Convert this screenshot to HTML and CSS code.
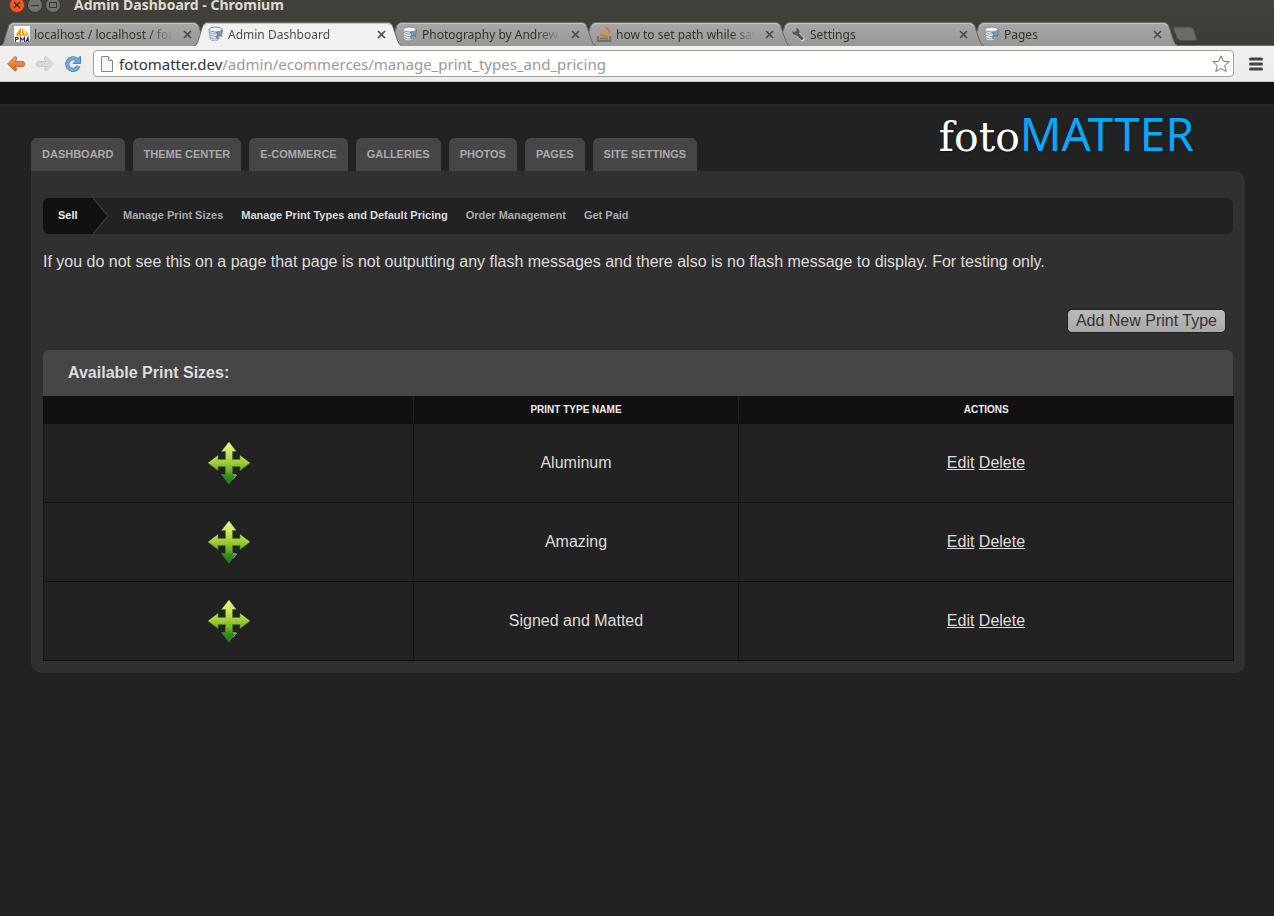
FILE: index.html
```html
<!DOCTYPE html>
<html lang="en">
<head>
<meta charset="utf-8">
<title>Admin Dashboard</title>
<link rel="stylesheet" href="styles.css">
</head>
<body>
<svg class="defs" aria-hidden="true">
  <defs>
    <linearGradient id="tab-fill" x1="0" y1="0" x2="0" y2="1"><stop offset="0" stop-color="#a9a8a6"/><stop offset="1" stop-color="#989795"/></linearGradient>
    <linearGradient id="move-v" gradientUnits="userSpaceOnUse" x1="0" y1="0" x2="0" y2="44"><stop offset="0" stop-color="#eaff9a"/><stop offset=".3" stop-color="#c3e455"/><stop offset=".5" stop-color="#9ccb35"/><stop offset=".68" stop-color="#6cae27"/><stop offset=".8" stop-color="#2f8c1e"/><stop offset="1" stop-color="#1c7a1a"/></linearGradient>
    <linearGradient id="orange" x1="0" y1="0" x2="0" y2="1"><stop offset="0" stop-color="#f4a468"/><stop offset="1" stop-color="#dd6520"/></linearGradient>
    <symbol id="tab-shape" viewBox="0 0 208 24"><path d="M0 24C4 23 4 19 5 16L8 6Q9.500 .5 14 .5H193Q198 .5 199 5L203 17Q204.500 23 208 24" stroke="#6d6b66"/><path d="M9.500 5Q11 1.500 14 1.500H193Q196.500 1.500 197.500 4" fill="none" stroke="#c4c3c0"/></symbol>
    <symbol id="cross" viewBox="0 0 9 9"><path d="M1 1L8 8M8 1L1 8" fill="none" stroke="#4c4b48" stroke-width="1.700"/></symbol>
    <symbol id="db" viewBox="0 0 16 16"><path d="M1 3.500L2 12.500C3 15.500 9.500 15.500 11 12.500V5Z" fill="#eef2f5" stroke="#8394a4" stroke-width=".8"/><path d="M1.500 6.500Q5 9 10 7.500M1.800 9Q5 11.500 10.500 10M2 11.500Q5 14 11 12.500" fill="none" stroke="#7d90a3" stroke-width=".9"/><path d="M7 5.500L14.500 3.500 13.500 10.500 11.500 9 9 12.500 8.500 10.500 10 7.500Z" fill="#7f9bb6" stroke="#4d6984" stroke-width=".7"/><ellipse cx="7.500" cy="3.500" rx="6.500" ry="2.400" fill="#f4f7f9" stroke="#74879a" stroke-width=".9"/></symbol>
    <symbol id="move" viewBox="0 0 44 44"><path d="M22 1L29 10.500H25.500V18.500H33V14.500L43 22 33 29.500V25.500H25.500V33.500H29L22 43 14.500 33.500H18.500V25.500H11V29.500L1 22 11 14.500V18.500H18.500V10.500H14.500Z" fill="url(#move-v)" stroke="#507f20" stroke-opacity=".7"/><path d="M15.500 10L22 1.500 28.500 10M11 15L2 22M33 15L42 22" fill="none" stroke="#eaffb0" stroke-opacity=".5"/><path d="M26 34H29.500L26 38.500" fill="none" stroke="#d9e8cc" stroke-opacity=".6"/></symbol>
  </defs>
</svg>

<header class="browser">
  <div class="titlebar">
    <button class="win win-close" aria-label="Close window"><svg width="8" height="8" viewBox="0 0 8 8"><path d="M1 1L7 7M7 1L1 7" stroke="#4a2214" stroke-width="1.300"/></svg></button>
    <button class="win" aria-label="Minimize"><svg width="8" height="8" viewBox="0 0 8 8"><path d="M0 4.500H8" stroke="#33322e"/></svg></button>
    <button class="win" aria-label="Maximize"><svg width="8" height="8" viewBox="0 0 8 8"><path d="M.5 1.500H7.500V6.500H.5Z" fill="none" stroke="#33322e"/></svg></button>
    <span class="window-title">Admin Dashboard - Chromium</span>
  </div>
  <div class="tabs">
    <div class="tab t1"><svg class="shape" preserveAspectRatio="none"><use href="#tab-shape"/></svg>
      <svg class="fav" viewBox="0 0 16 16"><path d="M0 0H16V16H0Z" fill="#fff"/><path d="M2 9L7 1V9ZM8 9V1L11 9ZM11 3L14.500 9H12Z" fill="#f89c0e"/><path d="M1.500 9.500H14.500" stroke="#f6b860"/><path d="M1.500 16V11.500H4Q5 13.500 1.500 13.500M6.500 16V11.500L8.500 14 10.500 11.500V16M12 16L14 11.500 15 16M12.500 14.500H15" fill="none" stroke="#34336c" stroke-width="1.200"/></svg>
      <span class="tab-text">localhost / localhost / fotomatter</span><button class="tab-x" aria-label="Close tab"><svg width="9" height="9"><use href="#cross"/></svg></button></div>
    <div class="tab t2 active"><svg class="shape" preserveAspectRatio="none"><use href="#tab-shape"/></svg><svg class="fav"><use href="#db"/></svg><span class="tab-text">Admin Dashboard</span><button class="tab-x" aria-label="Close tab"><svg width="9" height="9"><use href="#cross"/></svg></button></div>
    <div class="tab t3"><svg class="shape" preserveAspectRatio="none"><use href="#tab-shape"/></svg><svg class="fav"><use href="#db"/></svg><span class="tab-text">Photography by Andrew Mc</span><button class="tab-x" aria-label="Close tab"><svg width="9" height="9"><use href="#cross"/></svg></button></div>
    <div class="tab t4"><svg class="shape" preserveAspectRatio="none"><use href="#tab-shape"/></svg>
      <svg class="fav" viewBox="0 0 16 16"><path d="M1.800 10V15H14.200V10" fill="none" stroke="#6d6d6d" stroke-width="1.800"/><path d="M4 12.500H12" stroke="#7d7464" stroke-width="1.800"/><path d="M4 9L12 10.500" stroke="#c07b38" stroke-width="1.700"/><path d="M5.500 5L12.500 8.800" stroke="#e7962e" stroke-width="1.800"/><path d="M9.500 1L14.500 6.500" stroke="#ee6a29" stroke-width="1.800"/></svg>
      <span class="tab-text">how to set path while saving</span><button class="tab-x" aria-label="Close tab"><svg width="9" height="9"><use href="#cross"/></svg></button></div>
    <div class="tab t5"><svg class="shape" preserveAspectRatio="none"><use href="#tab-shape"/></svg>
      <svg class="fav" viewBox="0 0 16 16"><path d="M7.500 8L12.500 13" stroke="#d4d3d1" stroke-width="4.500" stroke-linecap="round"/><path d="M6.500 7L11.800 12.300" stroke="#575653" stroke-width="3.200" stroke-linecap="round"/><path d="M2 5.500A4 4 0 0 0 8.500 8.200 4 4 0 0 0 6.500 1.800V5L5 6Z" fill="#575653"/></svg>
      <span class="tab-text">Settings</span><button class="tab-x" aria-label="Close tab"><svg width="9" height="9"><use href="#cross"/></svg></button></div>
    <div class="tab t6"><svg class="shape" preserveAspectRatio="none"><use href="#tab-shape"/></svg><svg class="fav"><use href="#db"/></svg><span class="tab-text">Pages</span><button class="tab-x" aria-label="Close tab"><svg width="9" height="9"><use href="#cross"/></svg></button></div>
    <button class="new-tab" aria-label="New tab"><svg width="26" height="16" viewBox="0 0 26 16"><path d="M3 1H18Q21 1 22 4L25 14.500H9Q6 14.500 5 12L1.500 3Q1 1 3 1Z" fill="#6b6a66" stroke="#4d4c48"/></svg></button>
  </div>
  <div class="toolbar">
    <button class="tool" aria-label="Back"><svg width="20" height="18" viewBox="0 0 20 18"><path d="M9 1.500L1.500 9 9 16Q11 16 10.500 13.500L9 11.500H17Q18.500 11.500 18.500 9T17 6.500H9L10.500 4.500Q11 1.500 9 1.500Z" fill="url(#orange)" stroke="#c8692f"/></svg></button>
    <button class="tool" aria-label="Forward"><svg width="20" height="18" viewBox="0 0 20 18"><path d="M11 1.500L18.500 9 11 16Q9 16 9.500 13.500L11 11.500H3Q1.500 11.500 1.500 9T3 6.500H11L9.500 4.500Q9 1.500 11 1.500Z" fill="#d9d8d6" stroke="#c9c8c6"/></svg></button>
    <button class="tool" aria-label="Reload"><svg width="18" height="18" viewBox="0 0 18 18"><path d="M13 4.800A5.800 5.800 0 1 0 14.500 11" fill="none" stroke="#4f86bd" stroke-width="4.200"/><path d="M16.500 1V8.500H9Z" fill="#6ea5da" stroke="#4f86bd"/><path d="M13 4.800A5.800 5.800 0 1 0 14.500 11" fill="none" stroke="#77abdd" stroke-width="2.600"/></svg></button>
    <div class="omnibox">
      <svg width="12" height="16" viewBox="0 0 12 16"><path d="M.5 1Q.5 .5 1 .5H7.500L11.500 4.500V15.500H.5Z" fill="#f6f6f6" stroke="#858585"/><path d="M7.500 .5V4.500H11.500" fill="#fff" stroke="#858585"/></svg>
      <span class="url"><b>fotomatter.dev</b>/admin/ecommerces/manage_print_types_and_pricing</span>
      <button class="star" aria-label="Bookmark this page"><svg width="18" height="18" viewBox="0 0 18 18"><path d="M9 .8L11.300 6.300 17.200 6.700 12.700 10.600 14.200 16.500 9 13.500 3.800 16.500 5.300 10.600 .8 6.700 6.700 6.300Z" fill="#fff" stroke="#777" stroke-linejoin="round"/></svg></button>
    </div>
    <button class="menu" aria-label="Menu"><svg width="14" height="14" viewBox="0 0 14 14"><path d="M1.500 2H12.500M1.500 7H12.500M1.500 12H12.500" stroke="#454545" stroke-width="3" stroke-linecap="round"/></svg></button>
  </div>
</header>

<div class="topband"></div>
<div class="page">
  <div class="masthead">
    <nav class="main-nav">
      <a href="#">Dashboard</a><a href="#">Theme Center</a><a href="#">E-commerce</a><a href="#">Galleries</a><a href="#">Photos</a><a href="#">Pages</a><a href="#">Site Settings</a>
    </nav>
    <div class="logo"><span class="logo-foto">foto</span><span class="logo-matter">MATTER</span></div>
  </div>
  <main class="panel">
    <nav class="subnav">
      <span class="section">Sell</span>
      <svg width="16" height="36" viewBox="0 0 16 36"><path d="M0 0L15 18 0 36Z" fill="#111"/><path d="M0 0L15 18 0 36" fill="none" stroke="#393939" stroke-width="1.300"/></svg>
      <div class="sublinks"><a href="#">Manage Print Sizes</a><a href="#" class="current">Manage Print Types and Default Pricing</a><a href="#">Order Management</a><a href="#">Get Paid</a></div>
    </nav>
    <p class="flash">If you do not see this on a page that page is not outputting any flash messages and there also is no flash message to display. For testing only.</p>
    <div class="actions"><button class="add">Add New Print Type</button></div>
    <section>
      <h1 class="table-title">Available Print Sizes:</h1>
      <table class="types">
        <thead><tr><th class="c1"></th><th class="c2">Print Type Name</th><th class="c3">Actions</th></tr></thead>
        <tbody>
          <tr><td><svg class="move" role="img" aria-label="Move"><use href="#move"/></svg></td><td>Aluminum</td><td><a href="#">Edit</a> <a href="#">Delete</a></td></tr>
          <tr><td><svg class="move" role="img" aria-label="Move"><use href="#move"/></svg></td><td>Amazing</td><td><a href="#">Edit</a> <a href="#">Delete</a></td></tr>
          <tr><td><svg class="move" role="img" aria-label="Move"><use href="#move"/></svg></td><td>Signed and Matted</td><td><a href="#">Edit</a> <a href="#">Delete</a></td></tr>
        </tbody>
      </table>
    </section>
  </main>
</div>
</body>
</html>
```
FILE: styles.css
```css
* { box-sizing: border-box; }
body { margin: 0; background: #222; color: #ddd; font: 16px/18px "Liberation Sans", Arial, sans-serif; }
button { border: 0; padding: 0; background: none; font: inherit; color: inherit; }
svg { display: block; flex: none; }
.defs { position: absolute; width: 0; height: 0; }

/* Browser window */
.browser { overflow: hidden; background: linear-gradient(#42413c, #3c3b37 46px); font-family: "Noto Sans", sans-serif; }
.titlebar { display: flex; align-items: center; gap: 2px; height: 16px; margin: -3px 0 9px; padding-left: 9px; }
.win { display: flex; align-items: center; justify-content: center; width: 16px; height: 16px; border: 1px solid #34332f; border-radius: 50%; background: #73716a; }
.win-close { background: #ee5a2a; border-color: #7d3319; }
.window-title { margin-left: 11px; font-size: 14px; font-weight: 700; color: #dfdbd2; white-space: nowrap; }
.tabs { display: flex; height: 24px; box-shadow: inset 0 -1px #6b6a66; }
.tab { position: relative; flex: 0 1 208px; min-width: 0; height: 24px; margin-right: -14px; padding: 0 15px 0 14px; display: flex; align-items: center; gap: 4px; }
.t1 { z-index: 6; } .t2 { z-index: 7; } .t3 { z-index: 4; } .t4 { z-index: 3; } .t5 { z-index: 2; } .t6 { z-index: 1; }
.shape { position: absolute; inset: 0; width: 100%; height: 100%; fill: url(#tab-fill); z-index: -1; }
.active .shape { fill: #f2f1ef; }
.fav { width: 16px; height: 16px; }
.tab-text { flex: 1; min-width: 0; overflow: hidden; white-space: nowrap; padding-top: 2px; font-size: 12px; color: #36332b; -webkit-mask-image: linear-gradient(90deg, #000 calc(100% - 24px), transparent); mask-image: linear-gradient(90deg, #000 calc(100% - 24px), transparent); }
.active .tab-text { color: #4c4c4c; }
.tab-x { width: 9px; margin: 0 1px 0 6px; }
.new-tab { height: 16px; margin: 4px 0 0 24px; }
.t6 { margin-right: -28px; }
.t6 + .new-tab { margin-left: 22px; }
.toolbar { display: flex; align-items: center; height: 36px; padding: 0 11px 0 6px; gap: 9px; background: linear-gradient(#f2f1ef, #edecea); border-bottom: 1px solid #c9c8c6; }
.tool { width: 20px; }
.omnibox { flex: 1; min-width: 0; display: flex; align-items: center; height: 27px; padding: 0 3px 0 7px; gap: 6px; background: #fff; border: 1px solid #a3a09a; border-radius: 4px; }
.url { flex: 1; min-width: 0; overflow: hidden; white-space: nowrap; font-size: 15px; line-height: 22px; color: #999; }
.url b { font-weight: 400; color: #333; }
.menu { margin-left: 6px; }

/* Site */
.topband { height: 23px; background: #131313; border-bottom: 1px solid #2a2a2a; }
.page { padding: 0 29px 0 31px; }
.masthead { display: flex; justify-content: space-between; align-items: flex-end; height: 66px; }
.main-nav { display: flex; gap: 8px; }
.main-nav a { padding: 0 11px; height: 33px; line-height: 33px; border-radius: 6px 6px 0 0; background: #464646; color: #aaa; font-size: 11px; font-weight: 700; text-transform: uppercase; text-decoration: none; white-space: nowrap; }
.logo { display: flex; align-items: baseline; padding: 0 51px 6px 0; line-height: 56px; text-shadow: 1px 1px 2px #151515; }
.logo-foto { font-family: "DejaVu Serif", serif; font-size: 41px; color: #fff; }
.logo-matter { font-family: "Noto Sans", sans-serif; font-size: 46px; color: #00aaff; }
.panel { padding: 27px 12px 12px; background: #303030; border-radius: 0 10px 10px 10px; }
.subnav { display: flex; height: 36px; line-height: 35px; background: #222; border-radius: 6px; font-size: 11px; font-weight: 700; }
.section { width: 50px; padding-left: 15px; background: #111; color: #eee; border-radius: 6px 0 0 6px; }
.sublinks { display: flex; gap: 18px; padding-left: 14px; white-space: nowrap; }
.sublinks a { color: #aaa; text-decoration: none; }
.sublinks .current { color: #ddd; }
.flash { margin: 19px 0 38px; }
.actions { display: flex; justify-content: flex-end; padding-right: 7px; margin-bottom: 17px; }
.add { height: 24px; padding: 0 8px; border: 1px solid #222; border-radius: 5px; background: linear-gradient(#bbb, #a8a8a8); color: #333; line-height: 20px; }
.table-title { margin: 0; padding: 0 25px; height: 46px; line-height: 45px; font-size: 16px; background: #464646; border-radius: 6px 6px 0 0; }
.types { width: calc(100% + 1px); border-collapse: collapse; table-layout: fixed; text-align: center; }
.types th { height: 27px; padding: 2px 0 0; background: #111; color: #eee; font-size: 10px; line-height: 12px; text-transform: uppercase; border: solid #111; border-width: 0 0 1px 1px; }
.types th + th { border-left: 1px solid #222; }
.c1 { width: 31.1%; } .c2 { width: 27.3%; } .c3 { width: 41.6%; }
.types td { height: 79px; padding: 0; background: #222; border: 1px solid #111; }
.types a { color: #ddd; }
.move { width: 44px; height: 44px; margin: 0 auto; }
```
